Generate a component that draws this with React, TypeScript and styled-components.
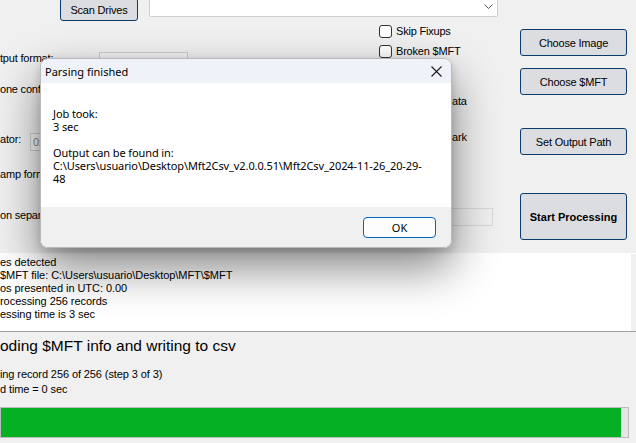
import React from "react";
import styled, { createGlobalStyle } from "styled-components";

const Global = createGlobalStyle`
  html, body { margin: 0; padding: 0; background: #f0f0f0; overflow: hidden; }
  #root { width: 636px; height: 443px; }
`;

const Window = styled.div`
  position: relative;
  width: 636px;
  height: 443px;
  overflow: hidden;
  background: #f0f0f0;
  font-family: "Liberation Sans", Arial, sans-serif;
  font-size: 11px;
  color: #000;
  letter-spacing: -0.2px;
`;

const TopSection = styled.div`
  height: 253px;
  display: flex;
  flex-direction: column;
`;

const TopRow = styled.div`
  height: 20px;
  display: flex;
  align-items: flex-start;
`;

const WinButton = styled.button<{ $w: number; $h: number; $bold?: boolean }>`
  box-sizing: border-box;
  width: ${(p) => p.$w}px;
  height: ${(p) => p.$h}px;
  padding: 0;
  background: #dcdde0;
  border: 1px solid #0b3a6e;
  border-radius: 3px;
  font-family: "Liberation Sans", Arial, sans-serif;
  font-size: 11px;
  font-weight: ${(p) => (p.$bold ? 700 : 400)};
  letter-spacing: ${(p) => (p.$bold ? "0" : "-0.2px")};
  color: #000;
  display: flex;
  align-items: center;
  justify-content: center;
`;

const ScanButton = styled(WinButton)`
  margin-left: 60px;
  margin-top: -2px;
`;

const Combo = styled.div`
  box-sizing: border-box;
  margin-left: 11px;
  margin-top: -4px;
  width: 349px;
  height: 21px;
  background: #fff;
  border: 1px solid #cfcfcf;
  border-radius: 2px;
  display: flex;
  align-items: center;
  justify-content: flex-end;
  padding-right: 4px;
`;

const Body = styled.div`
  flex: 1;
  display: grid;
  grid-template-columns: 379px 141px 107px;
`;

const LeftCol = styled.div`
  display: flex;
  flex-direction: column;
  padding-top: 32px;
`;

const FieldRow = styled.div<{ $h: number }>`
  height: ${(p) => p.$h}px;
  display: flex;
  align-items: flex-start;
`;

const FieldLabel = styled.span<{ $w: number }>`
  width: ${(p) => p.$w}px;
  flex: none;
  line-height: 12px;
  white-space: nowrap;
  overflow: hidden;
`;

const FieldBox = styled.div<{ $w: number; $h: number }>`
  box-sizing: border-box;
  width: ${(p) => p.$w}px;
  height: ${(p) => p.$h}px;
  border: 1px solid #cdcdcd;
  background: #f4f4f4;
  color: #8a8a8a;
  padding: 2px 2px;
  line-height: 12px;
`;

const MidCol = styled.div`
  display: flex;
  flex-direction: column;
  padding-top: 5px;
`;

const CheckRow = styled.div`
  height: 20px;
  display: flex;
  align-items: flex-start;
  gap: 4px;
  line-height: 13px;
`;

const CheckBox = styled.span`
  box-sizing: border-box;
  width: 13px;
  height: 13px;
  border: 1px solid #333;
  border-radius: 3px;
  background: #fff;
  flex: none;
`;

const MidText = styled.div<{ $top: number }>`
  margin-top: ${(p) => p.$top}px;
  padding-left: 73px;
  line-height: 12px;
  height: 12px;
`;

const MidBox = styled.div`
  box-sizing: border-box;
  margin-top: 65px;
  margin-left: 21px;
  width: 93px;
  height: 18px;
  border: 1px solid #d8d8d8;
  background: #f0f0f0;
`;

const RightCol = styled.div`
  display: flex;
  flex-direction: column;
  padding-top: 9px;
`;

const Spacer = styled.div<{ $h: number }>`
  height: ${(p) => p.$h}px;
  flex: none;
`;

const Log = styled.div`
  box-sizing: border-box;
  height: 79px;
  background: #fff;
  border-bottom: 1px solid #a0a0a0;
  display: flex;
`;

const LogText = styled.div`
  flex: 1;
  padding-top: 3px;
  line-height: 13px;
  white-space: nowrap;
  letter-spacing: -0.05px;
`;

const ScrollTrack = styled.div`
  width: 5px;
  background: #f0f0f0;
  margin-top: 1px;
`;

const Status = styled.div`
  height: 75px;
  display: flex;
  flex-direction: column;
  white-space: nowrap;
  letter-spacing: -0.1px;
`;

const BigStatus = styled.div`
  font-size: 15.5px;
  letter-spacing: 0;
  line-height: 18px;
  margin-top: 5px;
`;

const SmallStatus = styled.div<{ $top: number }>`
  line-height: 13px;
  margin-top: ${(p) => p.$top}px;
`;

const Progress = styled.div`
  box-sizing: border-box;
  width: 629px;
  height: 31px;
  border: 1px solid #bcbcbc;
  background: #e6e6e6;
  display: flex;
`;

const ProgressFill = styled.div`
  height: 100%;
  background: #06b025;
`;

/* ---------- Dialog ---------- */

const Dialog = styled.div`
  position: absolute;
  left: 40px;
  top: 58px;
  width: 412px;
  height: 190px;
  box-sizing: border-box;
  border: 1px solid #b9b9b9;
  border-radius: 8px;
  overflow: hidden;
  display: flex;
  flex-direction: column;
  box-shadow: 0 20px 46px rgba(0, 0, 0, 0.48), 0 3px 10px rgba(0, 0, 0, 0.16);
  font-family: "Noto Sans", sans-serif;
  letter-spacing: 0;
`;

const TitleBar = styled.div`
  height: 24px;
  background: #eff3f9;
  display: flex;
  align-items: center;
  justify-content: space-between;
  padding-left: 4px;
  padding-right: 9px;
  font-size: 11px;
`;

const DialogContent = styled.div`
  height: 124px;
  background: #fff;
  padding: 24px 0 0 12px;
  box-sizing: border-box;
  font-size: 11px;
  letter-spacing: -0.1px;
  line-height: 13px;
  white-space: nowrap;
`;

const Gap = styled.div`
  height: 13px;
`;

const Footer = styled.div`
  flex: 1;
  background: #f0f0f0;
  display: flex;
  justify-content: flex-end;
  align-items: flex-start;
  padding: 10px 15px 0 0;
`;

const OkButton = styled.button`
  box-sizing: border-box;
  width: 73px;
  height: 21px;
  background: #fdfdfd;
  border: 1px solid #0067c0;
  border-radius: 4px;
  font-family: "Noto Sans", sans-serif;
  font-size: 11px;
  color: #000;
  padding: 0;
`;

const CloseIcon = () => (
  <svg width="11" height="11" viewBox="0 0 11 11">
    <path d="M0.5 0.5 L10.5 10.5 M10.5 0.5 L0.5 10.5" stroke="#1a1a1a" strokeWidth="1.1" />
  </svg>
);

const Chevron = () => (
  <svg width="9" height="6" viewBox="0 0 9 6">
    <path d="M0.5 0.5 L4.5 4.5 L8.5 0.5" fill="none" stroke="#555" strokeWidth="1" />
  </svg>
);

export default function App() {
  return (
    <Window>
      <Global />
      <TopSection>
        <TopRow>
          <ScanButton $w={78} $h={23}>Scan Drives</ScanButton>
          <Combo>
            <Chevron />
          </Combo>
        </TopRow>
        <Body>
          <LeftCol>
            <FieldRow $h={31}>
              <FieldLabel $w={99}>tput format:</FieldLabel>
              <FieldBox $w={89} $h={21} />
            </FieldRow>
            <FieldRow $h={50}>
              <FieldLabel $w={99}>one confi</FieldLabel>
            </FieldRow>
            <FieldRow $h={35}>
              <FieldLabel $w={30}>ator:</FieldLabel>
              <FieldBox $w={60} $h={18}>0x</FieldBox>
            </FieldRow>
            <FieldRow $h={41}>
              <FieldLabel $w={99}>amp form</FieldLabel>
            </FieldRow>
            <FieldRow $h={20}>
              <FieldLabel $w={99}>on separ</FieldLabel>
            </FieldRow>
          </LeftCol>
          <MidCol>
            <CheckRow>
              <CheckBox />
              <span>Skip Fixups</span>
            </CheckRow>
            <CheckRow>
              <CheckBox />
              <span>Broken $MFT</span>
            </CheckRow>
            <MidText $top={30}>ata</MidText>
            <MidText $top={24}>ark</MidText>
            <MidBox />
          </MidCol>
          <RightCol>
            <WinButton $w={107} $h={27}>Choose Image</WinButton>
            <Spacer $h={12} />
            <WinButton $w={107} $h={27}>Choose $MFT</WinButton>
            <Spacer $h={33} />
            <WinButton $w={107} $h={27}>Set Output Path</WinButton>
            <Spacer $h={38} />
            <WinButton $w={107} $h={47} $bold>Start Processing</WinButton>
          </RightCol>
        </Body>
      </TopSection>

      <Log>
        <LogText>
          <div>es detected</div>
          <div>$MFT file: C:\Users\usuario\Desktop\MFT\$MFT</div>
          <div>os presented in UTC: 0.00</div>
          <div>rocessing 256 records</div>
          <div>essing time is 3 sec</div>
        </LogText>
        <ScrollTrack />
      </Log>

      <Status>
        <BigStatus>oding $MFT info and writing to csv</BigStatus>
        <SmallStatus $top={13}>ing record 256 of 256 (step 3 of 3)</SmallStatus>
        <SmallStatus $top={2}>d time = 0 sec</SmallStatus>
      </Status>

      <Progress>
        <ProgressFill style={{ width: `${(620 / 627) * 100}%` }} />
      </Progress>

      <Dialog>
        <TitleBar>
          <span>Parsing finished</span>
          <CloseIcon />
        </TitleBar>
        <DialogContent>
          <div>Job took:</div>
          <div>3 sec</div>
          <Gap />
          <div>Output can be found in:</div>
          <div>C:\Users\usuario\Desktop\Mft2Csv_v2.0.0.51\Mft2Csv_2024-11-26_20-29-</div>
          <div>48</div>
        </DialogContent>
        <Footer>
          <OkButton>OK</OkButton>
        </Footer>
      </Dialog>
    </Window>
  );
}
